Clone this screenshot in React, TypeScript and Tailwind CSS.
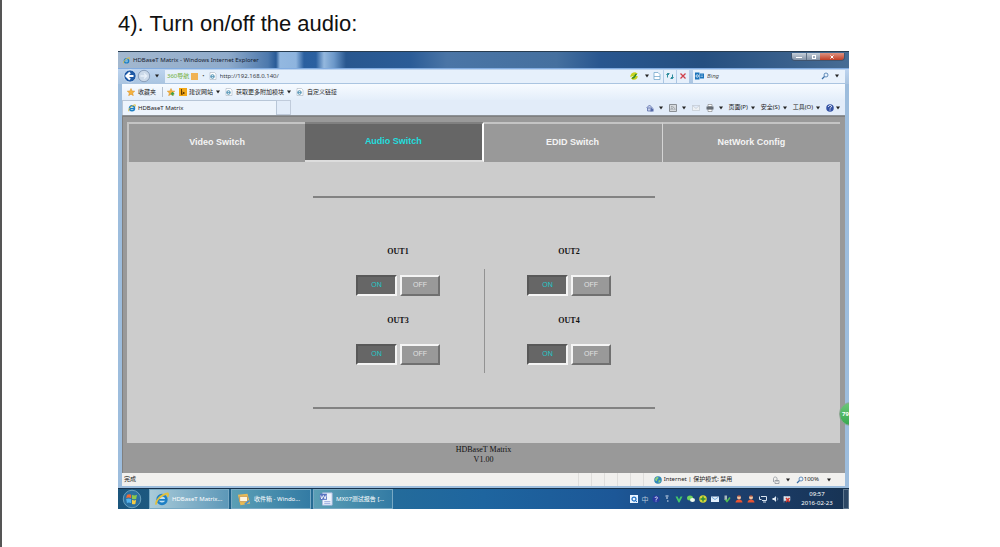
import type { ReactNode } from "react";
import { clsx } from "clsx";

const tabs = ["Video Switch", "Audio Switch", "EDID Switch", "NetWork Config"];
const outputs = ["OUT1", "OUT2", "OUT3", "OUT4"];

function IeIcon({ className }: { className: string }) {
  return (
    <svg viewBox="0 0 16 16" className={clsx("shrink-0", className)}>
      <circle cx="8" cy="8.5" r="5" fill="#bfe0f2" stroke="#1e7fc4" strokeWidth="3" />
      <path d="M4 9h8" stroke="#1e7fc4" strokeWidth="2" />
      <path
        d="M1.5 14.5C0 11 6 3 14.5 1.5c1 1 .5 3-.5 4"
        fill="none"
        stroke="#e2c03c"
        strokeWidth="2"
      />
    </svg>
  );
}

function PageIcon() {
  return (
    <svg viewBox="0 0 16 16" className="size-2 shrink-0">
      <path d="M2 1h9l3 3v11H2z" fill="#fff" stroke="#9aa7b5" />
      <circle cx="7" cy="9" r="3.5" fill="none" stroke="#3f88ae" strokeWidth="2" />
      <path d="M4 9h6" stroke="#3f88ae" strokeWidth="1.5" />
    </svg>
  );
}

function StarIcon({ plus = false }: { plus?: boolean }) {
  return (
    <svg viewBox="0 0 16 16" className="size-2 shrink-0">
      <path
        d="m8 1 2 5 5.500.4-4.200 3.600 1.400 5.300L8 12.400l-4.700 2.900 1.400-5.300L.5 6.400 6 6z"
        fill="#f5b23c"
        stroke="#d88d20"
      />
      {plus && <path d="M11 8v7M7.500 11.500h7" stroke="#43a047" strokeWidth="3" />}
    </svg>
  );
}

function Arrow() {
  return (
    <svg viewBox="0 0 8 8" className="size-1 shrink-0">
      <path d="M0 1h8L4 7z" fill="#222" />
    </svg>
  );
}

function GlobeIcon() {
  return (
    <svg viewBox="0 0 16 16" className="size-2 shrink-0">
      <circle cx="8" cy="8" r="7.500" fill="#2f86b8" />
      <path d="M3 4c3-3 6-2 6 0s-3 2-3 5-3 0-4-1zM9 9c3-1 5 0 4 2s-3 3-4 2z" fill="#8fd07a" />
    </svg>
  );
}

function SearchIcon() {
  return (
    <svg viewBox="0 0 16 16" className="size-2 shrink-0">
      <circle cx="10" cy="6" r="4" fill="#e8f2fc" stroke="#3a6ea5" strokeWidth="1.500" />
      <path d="m7 9-5 5" stroke="#3a6ea5" strokeWidth="2.500" />
    </svg>
  );
}

function TitleBar() {
  return (
    <div className="flex h-4 items-start justify-between bg-[linear-gradient(90deg,#a3b8cf_0,#8fabcb_110px,#4d79ad_150px,#285a96_158px,#93b8e0_162px,#8eb4de_178px,#2a5f9f_186px,#2b60a0_198px,#94b8de_206px,#6c98c9_216px,#28578f_228px,#2b5c97_40%,#4a75a6_45%,#45709f_60%,#28568f_66%,#254f80_80%,#476c94)] pl-[5px]">
      <div className="flex h-4 items-center gap-[3px]">
        <IeIcon className="size-[7px]" />
        <span className="text-[6px] text-[#16212f]">
          HDBaseT Matrix - Windows Internet Explorer
        </span>
      </div>
      <div className="mr-1 mt-px flex h-2 overflow-hidden rounded-b-sm border border-t-0 border-[#40546e]">
        <button
          aria-label="Minimize"
          className="flex w-[15px] items-end justify-center border-r border-[#5f7185] bg-gradient-to-b from-[#c5ced9] to-[#8494a8] pb-0.5"
        >
          <span className="h-px w-1.5 bg-white" />
        </button>
        <button
          aria-label="Restore"
          className="flex w-[13px] items-center justify-center bg-gradient-to-b from-[#c5ced9] to-[#8494a8]"
        >
          <span className="size-1 border border-white" />
        </button>
        <button
          aria-label="Close"
          className="flex w-6 items-center justify-center bg-gradient-to-b from-[#dc9282] to-[#c13b22]"
        >
          <svg viewBox="0 0 8 8" className="size-1">
            <path d="m1 1 6 6m0-6L1 7" stroke="#fff" strokeWidth="2" />
          </svg>
        </button>
      </div>
    </div>
  );
}

function AddressBar() {
  return (
    <div className="flex h-4 items-center border-t border-[#82ace0] bg-gradient-to-b from-[#bdd4ef] to-[#a9c4e0] pb-px pl-[5px] pr-1">
      <button aria-label="Back" className="shrink-0">
        <svg viewBox="0 0 16 16" className="size-3.5">
          <circle cx="8" cy="8" r="7" fill="#1f5aa6" stroke="#dbe8f6" />
          <path d="M12 8H4m4-4L4 8l4 4" fill="none" stroke="#fff" strokeWidth="2.500" />
        </svg>
      </button>
      <button aria-label="Forward" className="shrink-0">
        <svg viewBox="0 0 16 16" className="size-3.5">
          <circle cx="8" cy="8" r="6.500" fill="#cbd9e9" stroke="#8398b3" />
          <path d="M4 8h7M8 5l3 3-3 3" fill="none" stroke="#e9f1fa" strokeWidth="1.500" />
        </svg>
      </button>
      <span className="ml-1 mr-1.5 flex">
        <Arrow />
      </span>
      <div className="flex h-[13px] min-w-0 flex-1 items-center bg-[#e6f0fb] px-0.5">
        <span className="whitespace-nowrap text-[6px] text-[#6fae35]">360导航</span>
        <span className="ml-0.5 size-[7px] shrink-0 bg-[#f0b254]" />
        <span className="mx-1 text-[6px] text-[#555]">•</span>
        <PageIcon />
        <input
          aria-label="Address"
          defaultValue="http://192.168.0.140/"
          className="ml-[3px] min-w-0 flex-1 bg-transparent text-[6px] text-[#3a4048] outline-none"
        />
        <svg viewBox="0 0 16 16" className="size-2.5 shrink-0">
          <path d="M2 10c0-5 3-8 8-8l4 2-4 4H6zM14 8c0 4-3 7-8 6l-3-2 4-4z" fill="#c8d21e" />
          <path d="M5 11c4 1 4-4 7-6" fill="none" stroke="#2f8a2b" strokeWidth="2.500" />
        </svg>
        <span className="ml-1.5">
          <Arrow />
        </span>
      </div>
      <div className="flex h-[13px] gap-px">
        <button aria-label="Compatibility view" className="flex w-3 items-center justify-center bg-[#e6f0fb]">
          <svg viewBox="0 0 16 16" className="size-2">
            <path d="M2 1h8l4 4v10H2zM2 9h12" fill="#fff" stroke="#6fa6c9" strokeWidth="1.500" />
          </svg>
        </button>
        <button aria-label="Refresh" className="flex w-3 items-center justify-center bg-[#e6f0fb]">
          <svg viewBox="0 0 16 16" className="size-2">
            <path d="M7 3H3v8M1 6l2-3 3 3M9 13h4V5M10 10l3 3 2-3" fill="none" stroke="#2d8d9d" strokeWidth="2" />
          </svg>
        </button>
        <button aria-label="Stop" className="flex w-3 items-center justify-center bg-[#e6f0fb]">
          <svg viewBox="0 0 16 16" className="size-2">
            <path d="m3 3 10 10m0-10L3 13" stroke="#d0404a" strokeWidth="2.500" />
          </svg>
        </button>
      </div>
      <div className="ml-1 flex h-[13px] w-[152px] items-center bg-[#e9f2fc] px-0.5">
        <svg viewBox="0 0 18 16" className="h-2 w-[9px] shrink-0">
          <path d="M0 1h9v14H0zM10 3h8v10h-8z" fill="#1c74bb" />
          <circle cx="4.500" cy="8" r="2.500" fill="none" stroke="#fff" strokeWidth="1.500" />
          <path d="M11 6h5M11 9h5" stroke="#d5e8f8" />
        </svg>
        <input
          aria-label="Search"
          placeholder="Bing"
          className="ml-[3px] min-w-0 flex-1 bg-transparent text-[6px] italic outline-none placeholder:text-[#555]"
        />
        <SearchIcon />
        <span className="ml-1.5 mr-1">
          <Arrow />
        </span>
      </div>
    </div>
  );
}

function FavoritesBar() {
  return (
    <div className="flex h-4 items-center whitespace-nowrap bg-gradient-to-b from-[#f7fbff] to-[#e4eefa] pl-[5px] text-[6px] text-[#222]">
      <StarIcon />
      <a href="#favorites" className="ml-[3px]">收藏夹</a>
      <span className="ml-1.5 mr-1 h-2.5 w-px bg-[#b5c0cd]" />
      <StarIcon plus />
      <svg viewBox="0 0 16 16" className="ml-1 size-2 shrink-0">
        <path d="M0 0h16v16H0z" fill="#f2a818" />
        <path d="M5 2v11l6-3-4-2" fill="none" stroke="#633c00" strokeWidth="2" />
      </svg>
      <a href="#suggested" className="ml-0.5 mr-[3px]">建议网站</a>
      <Arrow />
      <span className="ml-[5px] mr-[3px]">
        <PageIcon />
      </span>
      <a href="#modules" className="mr-[3px]">获取更多附加模块</a>
      <Arrow />
      <span className="ml-[5px] mr-[3px]">
        <PageIcon />
      </span>
      <a href="#links">自定义链接</a>
    </div>
  );
}

function ToolMenu({ children }: { children: ReactNode }) {
  return (
    <button className="flex items-center gap-[3px]">
      {children}
      <Arrow />
    </button>
  );
}

function PageTabsBar() {
  return (
    <div className="flex h-4 items-stretch whitespace-nowrap border-b border-[#8d9297] bg-[#e2ecf9] text-[6px] text-[#222]">
      <div className="flex w-[155px] items-center gap-0.5 border border-b-0 border-[#b8c6d7] bg-[#edf4fc] pl-[5px]">
        <IeIcon className="size-2" />
        HDBaseT Matrix
      </div>
      <button aria-label="New tab" className="w-3.5 border border-l-0 border-[#c0cbdb]" />
      <div className="ml-auto flex items-center gap-1.5 pr-[5px]">
        <ToolMenu>
          <svg viewBox="0 0 16 16" className="mr-0.5 size-2">
            <path d="M1 8l6-6 6 6M3 8v6h8V8z" fill="#c7d1ea" stroke="#566aa8" strokeWidth="1.500" />
            <path d="M9 9h6v6H9z" fill="#566aa8" />
          </svg>
        </ToolMenu>
        <ToolMenu>
          <svg viewBox="0 0 16 16" className="mr-0.5 size-2">
            <path d="M1 1h14v14H1z" fill="#d6dade" stroke="#8b9096" strokeWidth="2" />
            <path d="M4 12V9m0-4c5 0 8 3 8 7M4 8c3 0 4 2 4 4" fill="none" stroke="#8b9096" strokeWidth="1.500" />
          </svg>
        </ToolMenu>
        <button aria-label="Read mail">
          <svg viewBox="0 0 16 12" className="h-1.5 w-2">
            <path d="M1 1h14v10H1zM1 1l7 6 7-6" fill="#eef1f4" stroke="#b4bbc3" />
          </svg>
        </button>
        <ToolMenu>
          <svg viewBox="0 0 16 16" className="mr-0.5 size-2">
            <path d="M4 1h8v4H4zM4 10h8v5H4z" fill="#fff" stroke="#666" />
            <path d="M1 5h14v6H1z" fill="#666d75" />
          </svg>
        </ToolMenu>
        <ToolMenu>页面(P)</ToolMenu>
        <ToolMenu>安全(S)</ToolMenu>
        <ToolMenu>工具(O)</ToolMenu>
        <button aria-label="Help" className="flex items-center gap-0.5">
          <svg viewBox="0 0 16 16" className="size-2">
            <circle cx="8" cy="8" r="7.500" fill="#3452a4" />
            <path d="M5 6c0-4 6-4 6-1 0 2-3 2-3 4m0 2v2" fill="none" stroke="#fff" strokeWidth="2" />
          </svg>
          <Arrow />
        </button>
      </div>
    </div>
  );
}

function OutputControl({ name }: { name: string }) {
  return (
    <div className="flex flex-col items-center">
      <h2 className="h-3 font-['Liberation_Serif',serif] text-[8px] font-bold leading-3 text-[#111]">
        {name}
      </h2>
      <div className="mt-[17px] flex gap-[3px]">
        <button
          aria-pressed="true"
          className="h-[21px] w-[41px] border-2 border-b-[#f4f4f4] border-l-[#585858] border-r-[#f4f4f4] border-t-[#585858] bg-[#666] text-[7px] text-[#22c8c8]"
        >
          ON
        </button>
        <button
          aria-pressed="false"
          className="h-[21px] w-10 border-2 border-b-[#707070] border-l-[#f4f4f4] border-r-[#707070] border-t-[#f4f4f4] bg-[#999] text-[7px] text-[#e0e0e0]"
        >
          OFF
        </button>
      </div>
    </div>
  );
}

function MatrixPage() {
  return (
    <main className="border-l border-t border-[#808080] bg-[#999] pl-1 pr-[5px] pt-[5px] font-['Liberation_Sans',sans-serif]">
      <nav className="grid grid-cols-4">
        {tabs.map((tab) => (
          <button
            key={tab}
            className={clsx(
              "h-10 border-t-2 text-[9px] font-bold",
              tab === "Audio Switch"
                ? "border-b-2 border-r-2 border-b-[#ddd] border-r-white border-t-[#808080] bg-[#666] text-[#22dede]"
                : "border-t-[#c4c4c4] bg-[#999] text-[#f4f4f4]",
              tab === "Video Switch" && "border-l-2 border-l-[#c4c4c4]",
              tab === "NetWork Config" && "border-l border-l-[#d4d4d4]"
            )}
          >
            {tab}
          </button>
        ))}
      </nav>
      <section className="bg-[#ccc] py-[34px]">
        <div className="mx-auto w-[342px] border-y-2 border-[#828282] pb-[42px] pt-12">
          <div className="relative grid grid-cols-2 gap-y-[19px]">
            {outputs.map((name) => (
              <OutputControl key={name} name={name} />
            ))}
            <div className="absolute bottom-[-8px] left-1/2 top-[23px] w-px bg-[#929292]" />
          </div>
        </div>
      </section>
      <footer className="h-[30px] pt-0.5 text-center font-['Liberation_Serif',serif] text-[8px] leading-[10px] text-[#111]">
        <p>HDBaseT Matrix</p>
        <p>V1.00</p>
      </footer>
    </main>
  );
}

function StatusBar() {
  return (
    <div className="flex h-[13px] items-center whitespace-nowrap bg-[#f1f0ee] px-0.5 text-[6px] text-[#222]">
      <span>完成</span>
      <div className="ml-auto flex h-[13px] gap-3">
        {[1, 2, 3, 4, 5, 6].map((cell) => (
          <span key={cell} className="w-px bg-[#dfdedc]" />
        ))}
      </div>
      <div className="ml-2.5 flex w-[118px] items-center gap-0.5">
        <GlobeIcon />
        Internet | 保护模式: 禁用
      </div>
      <div className="flex w-6 items-center gap-1.5">
        <svg viewBox="0 0 16 16" className="size-2">
          <path d="M3 12V5c0-4 7-4 7 0v7M6 9h8v6H6z" fill="none" stroke="#8a8f95" strokeWidth="1.500" />
        </svg>
        <Arrow />
      </div>
      <SearchIcon />
      <span className="mr-2">100%</span>
      <span className="mr-3">
        <Arrow />
      </span>
    </div>
  );
}

function TaskButton({ label, active, children }: { label: string; active?: boolean; children: ReactNode }) {
  return (
    <button
      className={clsx(
        "flex h-5 w-20 items-center gap-[3px] overflow-hidden whitespace-nowrap border border-[#78a9c4] pl-[5px] text-[6px] text-white",
        active ? "bg-gradient-to-r from-[#a9cbd9] to-[#5d98b8]" : "bg-gradient-to-r from-[#5b9fb5] to-[#337ba4]"
      )}
    >
      {children}
      {label}
    </button>
  );
}

function Tray() {
  return (
    <div className="flex items-center gap-1">
      <div className="flex items-center gap-[3px]">
        <svg viewBox="0 0 16 16" className="size-2">
          <path d="M0 0h16v16H0z" fill="#e8f3ff" />
          <circle cx="8" cy="8" r="4" fill="none" stroke="#1d70c4" strokeWidth="2.500" />
          <path d="m10 10 4 4" stroke="#1d70c4" strokeWidth="2" />
        </svg>
        <span className="w-2 text-center text-[7px] leading-none text-[#b7c6d8]">中</span>
        <svg viewBox="0 0 16 16" className="size-2">
          <circle cx="8" cy="8" r="7" fill="#2839a0" />
          <path d="M6 6c0-3 5-3 5 0 0 2-3 1-3 4m0 1v2" fill="none" stroke="#fff" strokeWidth="1.500" />
        </svg>
        <svg viewBox="0 0 16 16" className="size-2">
          <path d="M5 2h6M6 6h4M8 12h3" stroke="#dce8f5" strokeWidth="2" />
        </svg>
      </div>
      <svg viewBox="0 0 16 16" className="size-2">
        <path d="M1 3h4l3 6 3-6h4L9 15H7z" fill="#42c76b" />
      </svg>
      <svg viewBox="0 0 16 16" className="size-2">
        <ellipse cx="6" cy="6" rx="6" ry="5" fill="#6fd35e" />
        <ellipse cx="11" cy="10" rx="5" ry="4" fill="#eef8ec" />
      </svg>
      <svg viewBox="0 0 16 16" className="size-2">
        <circle cx="8" cy="8" r="7.500" fill="#d6d637" />
        <path d="M8 3v10M3 8h10" stroke="#2d8c37" strokeWidth="3" />
      </svg>
      <svg viewBox="0 0 16 16" className="size-2">
        <path d="M0 3h16v11H0z" fill="#e2effb" />
        <path d="m1 4 7 5 7-5" fill="none" stroke="#5094d2" strokeWidth="1.500" />
      </svg>
      <svg viewBox="0 0 16 16" className="size-2">
        <path d="M3 1h5v9H3z" fill="#a9b7bd" />
        <path d="m5 9 3 4 6-8" fill="none" stroke="#52bd52" strokeWidth="3" />
      </svg>
      {["first", "second"].map((key) => (
        <svg key={key} viewBox="0 0 16 16" className="size-2">
          <circle cx="8" cy="5" r="4" fill="#f0c3a0" />
          <path d="M1 15c0-8 14-8 14 0z" fill="#e75332" />
          <path d="M5 2h6" stroke="#9a3020" strokeWidth="2" />
        </svg>
      ))}
      <svg viewBox="0 0 16 16" className="size-2">
        <path d="M4 3h11v8H6M1 3v6h4M8 14h6" fill="none" stroke="#d7e3f0" strokeWidth="2" />
      </svg>
      <svg viewBox="0 0 16 16" className="size-2">
        <path d="M3 6h3l4-4v12l-4-4H3z" fill="#dfe9f4" />
        <path d="M12 5c2 2 2 4 0 6" fill="none" stroke="#dfe9f4" />
      </svg>
      <svg viewBox="0 0 16 16" className="size-2">
        <path d="M2 2v13M2 3h12v8H2z" fill="#dbe3ec" stroke="#dbe3ec" />
        <path d="m6 6 7 8m0-8-7 8" stroke="#d5342a" strokeWidth="3" />
      </svg>
    </div>
  );
}

function Taskbar() {
  return (
    <div className="flex h-[21px] items-center border-t border-[#16324d] bg-[linear-gradient(90deg,#1b557c_0,#276f98_30%,#1e659f_50%,#1c5797_68%,#1c3e6c_85%,#173354)]">
      <button aria-label="Start" className="ml-1 mr-[7px]">
        <svg viewBox="0 0 24 24" className="size-5">
          <circle cx="12" cy="12" r="10.500" fill="#2a6f9f" stroke="#77acc5" />
          <path d="M6 7c2-1 4-1 5 0v4c-2-1-4-1-6 0z" fill="#ee6b35" />
          <path d="M12 7c2 1 4 1 6 0l-1 5c-2 1-4 0-5 0z" fill="#8cc94c" />
          <path d="M5 12c2-1 4-1 6 0v5c-2-1-4-1-5 0z" fill="#55b2ea" />
          <path d="M12 13c2 1 4 1 5 0l-1 5c-2 1-3 0-4 0z" fill="#f6cd45" />
        </svg>
      </button>
      <div className="flex gap-0.5">
        <TaskButton label="HDBaseT Matrix..." active>
          <IeIcon className="size-3.5" />
        </TaskButton>
        <TaskButton label="收件箱 - Windo...">
          <svg viewBox="0 0 16 16" className="size-3.5 shrink-0">
            <path d="m1 3 11-1 3 11-11 2z" fill="#eabb55" />
            <path d="M3 5h9v6H3z" fill="#fff5df" stroke="#c6964b" />
            <path d="m9 14 5-4" stroke="#4b91cc" strokeWidth="2" />
          </svg>
        </TaskButton>
        <TaskButton label="MX07测试报告 [...">
          <svg viewBox="0 0 16 16" className="size-3.5 shrink-0">
            <path d="M4 1h11v14H4z" fill="#eef3fc" stroke="#adbbe0" />
            <path d="M1 2h8v7H1z" fill="#5873c1" />
            <path d="m2 4 1 4 2-4 2 4 1-4" fill="none" stroke="#fff" />
            <path d="M6 11h7M6 13h7" stroke="#8fa4dc" />
          </svg>
        </TaskButton>
      </div>
      <div className="ml-auto flex items-center">
        <Tray />
        <div className="w-[52px] text-center text-[6px] leading-[9px] text-white">
          <p>09:57</p>
          <p>2016-02-23</p>
        </div>
        <button aria-label="Show desktop" className="h-5 w-1.5 border border-[#60788f] bg-[#2c4765]" />
      </div>
    </div>
  );
}

export default function App() {
  return (
    <div className="min-h-screen border-l-2 border-[#555] bg-white pl-[116px] pr-[151px] font-['Liberation_Sans',sans-serif]">
      <h1 className="h-[51px] pt-[11px] text-[22px] leading-[26px] text-[#111]">
        4). Turn on/off the audio:
      </h1>
      <div className="relative overflow-hidden font-['Noto_Sans','Noto_Sans_CJK_SC',sans-serif]">
        <div className="border-t border-[#273c50] bg-[#9dbddd] pb-0.5">
          <TitleBar />
          <AddressBar />
          <div className="mx-1">
            <FavoritesBar />
            <PageTabsBar />
            <MatrixPage />
            <StatusBar />
          </div>
        </div>
        <Taskbar />
        <div className="absolute -right-3.5 top-[351px] flex size-6 items-center rounded-full border border-[#8aa590] bg-gradient-to-b from-[#6bc778] to-[#36a950] pl-0.5 text-[6px] font-bold text-white">
          79
        </div>
      </div>
    </div>
  );
}
